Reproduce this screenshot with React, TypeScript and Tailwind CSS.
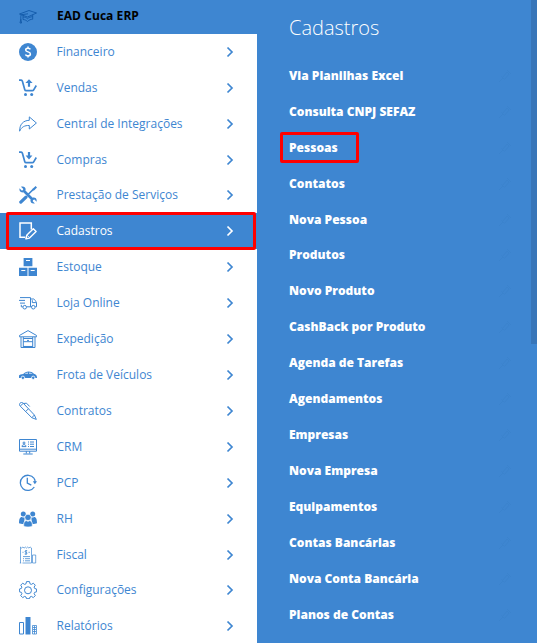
import type { ReactNode } from 'react'
import clsx from 'clsx'

type MenuItem = {
  label: string
  icon: ReactNode
}

// Ícones do menu, todos em uma grade de 18x18
function Icon({ children }: { children: ReactNode }) {
  return (
    <svg
      viewBox="0 0 18 18"
      className="size-[18px] shrink-0"
      fill="none"
      stroke="currentColor"
      strokeWidth="1"
    >
      {children}
    </svg>
  )
}

function CartBase() {
  return (
    <>
      <path d="M0 1.200h2.200c.7 0 1 .4 1.200 1.100l2.400 8.400c.2.7.6 1 1.300 1h6.200c.7 0 1.100-.3 1.400-.9L17.300 6.500" strokeWidth="1.700" />
      <circle cx="6.500" cy="15.600" r="1.500" fill="currentColor" stroke="none" />
      <circle cx="12.700" cy="15.600" r="1.500" fill="currentColor" stroke="none" />
    </>
  )
}

const items: MenuItem[] = [
  {
    label: 'Financeiro',
    icon: (
      <>
        <circle cx="9" cy="9" r="9" fill="currentColor" stroke="none" />
        <path d="M11.400 6.300C11 5.500 10.100 5.200 9 5.200c-1.400 0-2.300.6-2.300 1.700 0 2.600 4.700 1.300 4.700 4 0 1.200-1 1.900-2.400 1.900-1.200 0-2.200-.5-2.500-1.400M9 3.400v1.800M9 12.800v1.800" stroke="#fff" strokeWidth="1.500" />
      </>
    ),
  },
  {
    label: 'Vendas',
    icon: (
      <>
        <CartBase />
        <path d="M10 .3l3.600 3.800h-2.500v3.700H8.900V4.100H6.400z" fill="currentColor" stroke="none" />
      </>
    ),
  },
  {
    label: 'Central de Integrações',
    icon: <path d="M.6 16.200C.6 9.300 4.200 5.500 10.300 5.300V1.900L17.400 8l-7.100 6v-3.500C5.600 10.300 2.500 12 .6 16.200z" strokeLinejoin="round" />,
  },
  {
    label: 'Compras',
    icon: (
      <>
        <CartBase />
        <path d="M10 8.400l3.400-3.800h-2.300V.9H8.900v3.700H6.600z" fill="currentColor" stroke="none" />
      </>
    ),
  },
  {
    label: 'Prestação de Serviços',
    icon: (
      <>
        <path d="M5 5l8.500 8.500" strokeWidth="2.600" />
        <path d="M2 .7l2.300 2.200-.4 1.300-1.300.4L.5 2.300C0 5 1.600 6.800 4.300 6.300L6.600 4C7 1.500 5 0 2 .7z" fill="currentColor" stroke="none" />
        <path d="M15.900 17.400l-2.200-2.200.4-1.300 1.300-.4 2.200 2.200c.5-2.800-1.100-4.600-3.900-4l-2.200 2.200c-.4 2.600 1.500 4.200 4.400 3.500z" fill="currentColor" stroke="none" />
        <path d="M8.800 8.800l6-5.900" strokeWidth="1.500" />
        <path d="M13.700 2.700L16.600 0 18 1.400l-2.700 2.900-1.100.2-.7-.7z" fill="currentColor" stroke="none" />
        <path d="M1.800 16.100l5.200-5" strokeWidth="3.200" strokeLinecap="round" />
      </>
    ),
  },
  {
    label: 'Cadastros',
    icon: (
      <>
        <path d="M12.300 7.500V1H1v14.300h5.200" strokeWidth="1.500" />
        <path d="M6.900 16.800l.8-3.500 6.600-6.500 2.800 2.800-6.600 6.500z" strokeWidth="1.400" strokeLinejoin="round" />
        <path d="M8 13.200l2.600 2.600" />
      </>
    ),
  },
  {
    label: 'Estoque',
    icon: (
      <>
        <path d="M4.600 0h8.800v8.200H4.600zM0 9.700h8.500V18H0zM9.500 9.700H18V18H9.500z" fill="currentColor" stroke="none" />
        <path d="M7 2.500h4M2.300 12.500h4M11.700 12.500h4" stroke="#fff" />
      </>
    ),
  },
  {
    label: 'Loja Online',
    icon: (
      <>
        <path d="M1 3.600h10.500v9.200H7.800M0 6.400h6M1 9.100h5M2.300 12.800h1.400M2.300 10.800v2M11.500 5h3.300c1.300.8 2.200 2.400 2.700 4v3.800h-1.300M11.500 12.800h1M13.300 6.200v2.400h3.600" />
        <circle cx="5.700" cy="13.200" r="1.800" />
        <circle cx="14.300" cy="13.200" r="1.800" />
      </>
    ),
  },
  {
    label: 'Expedição',
    icon: (
      <>
        <path d="M.4 6.800V5.500L9 .6l8.600 4.900v1.300H.4M2 7v10.500h14V7M4.300 17.500V7M13.700 17.500V7M4.300 8.500h9.400M4.300 11.700h9.400M8 10.400h2" />
        <path d="M4.300 16.700h9.400" strokeWidth="1.500" />
      </>
    ),
  },
  {
    label: 'Frota de Veículos',
    icon: (
      <>
        <path d="M0 12V9.500c.4-1 2.400-1.500 4.200-1.600 1.500-1.600 3.100-2.500 5.300-2.500 2.500 0 4 .7 5.400 2.400 1.800.4 3.100 1.600 3.100 3.600v.6H0z" fill="currentColor" stroke="none" />
        <path d="M5.600 7.900c.9-1 2-1.500 3.400-1.500v1.500zM10 6.400c1.600 0 2.700.5 3.600 1.500H10z" fill="#fff" fillOpacity=".6" stroke="none" />
        <circle cx="3.900" cy="11.800" r="1.700" fill="currentColor" stroke="#fff" strokeWidth=".8" />
        <circle cx="14.200" cy="11.800" r="1.700" fill="currentColor" stroke="#fff" strokeWidth=".8" />
      </>
    ),
  },
  {
    label: 'Contratos',
    icon: (
      <path d="M1 1.200c1-1 2.300-.9 3.200 0L15.400 13l1.900 4.400-4.500-1.700L1.200 4.100c-.9-.9-1-2-.2-2.900zM12.800 15.700l2.600-2.700M6.700 9.500l2.700-2.700M1.300 4l3-2.700M4.500 1.500l3-.3 3.200 3.300" />
    ),
  },
  {
    label: 'CRM',
    icon: (
      <>
        <path d="M.5 1.500h17v11.700H.5zM.5 11.200h17M7.300 13.200v2.300M10.700 13.200v2.300M4.300 16h9.400" />
        <circle cx="5" cy="5" r="1" />
        <path d="M3 8.600c0-2.600 4-2.600 4 0zM9 4h1M11 4h4M9 6.200h1M11 6.200h4M9 8.500h1M11 8.500h4" />
      </>
    ),
  },
  {
    label: 'PCP',
    icon: (
      <>
        <path d="M15.100 4.400A7.600 7.600 0 1 0 15.300 13" strokeWidth="1.300" />
        <path d="M15.100 4.400c.7 1.100 1 2.200 1 3.500" strokeWidth="1.300" />
        <path d="M13.800 7.300H18l-2.100 3z" fill="currentColor" stroke="none" />
        <path d="M8.300 3.700v5.500l4 1.900" strokeWidth="1.300" />
      </>
    ),
  },
  {
    label: 'RH',
    icon: (
      <g fill="currentColor" stroke="none">
        <circle cx="4.300" cy="4" r="2.500" />
        <circle cx="13.700" cy="4" r="2.500" />
        <path d="M0 13.300c0-4 .7-6.300 3-6.300.8.600 1.700.7 2.500.3C6 9.400 5 11 4.500 14 2.800 14 1 13.900 0 13.300zM18 13.300c0-4-.7-6.300-3-6.300-.8.600-1.700.7-2.500.3C12 9.400 13 11 13.500 14c1.700 0 3.500-.1 4.500-.7z" />
        <circle cx="9" cy="7.400" r="3.200" stroke="#fff" strokeWidth=".7" />
        <path d="M4.600 16c0-3.400.9-5.300 2.900-5.300.9.700 2.100.7 3 0 2 0 2.900 1.900 2.900 5.300-2.300 1.300-6.500 1.300-8.800 0z" stroke="#fff" strokeWidth=".6" />
      </g>
    ),
  },
  {
    label: 'Fiscal',
    icon: (
      <>
        <path d="M1.500 17V1l1.200 1.100L3.900 1l1.200 1.100L6.300 1l1.200 1.100L8.700 1l1.200 1.100L11.100 1l1.400 1v15M.8 17h1.400M3.500 17h9M13.500 17V9h3.200v8z" strokeWidth=".7" />
        <path d="M8.200 4.700H7c-1.300 0-1.200 1.500 0 1.600 1.400.1 1.400 1.700 0 1.700H5.700M7 4v5" strokeWidth=".8" />
        <path d="M3.500 6.300h1M9.500 6.300h1.300M4 10.600h7M4 12.700h1M6 12.700h5M4 14.800h1M6 14.800h5" strokeWidth=".8" />
      </>
    ),
  },
  {
    label: 'Configurações',
    icon: (
      <>
        <path d="M7.500.6h3l.5 2.200 1.400.6 1.900-1.200 2 2-1.200 1.900.6 1.400 1.900.5v2.800l-1.900.5-.6 1.400 1.200 1.900-2 2-1.900-1.200-1.400.6-.5 1.700h-3L7 16l-1.400-.6-1.900 1.200-2-2 1.200-1.900-.6-1.400L.4 10.800V8l1.900-.5.6-1.400-1.200-1.900 2-2 1.900 1.200L7 2.800z" strokeLinejoin="round" />
        <circle cx="9" cy="9.300" r="3.500" />
      </>
    ),
  },
  {
    label: 'Relatórios',
    icon: (
      <>
        <path d="M.5 5.500h4v11.500h-4z" />
        <path d="M6.500 0h5v17.500h-5z" fill="currentColor" stroke="none" />
        <path d="M13.500 8.500h4V17h-4zM14 10.500h3M14 12.500h3M14 14.500h3M15.500 9v8" strokeWidth=".8" />
      </>
    ),
  },
]

const links = [
  'Via Planilhas Excel',
  'Consulta CNPJ SEFAZ',
  'Pessoas',
  'Contatos',
  'Nova Pessoa',
  'Produtos',
  'Novo Produto',
  'CashBack por Produto',
  'Agenda de Tarefas',
  'Agendamentos',
  'Empresas',
  'Nova Empresa',
  'Equipamentos',
  'Contas Bancárias',
  'Nova Conta Bancária',
  'Planos de Contas',
]

function SidebarItem({ item, active }: { item: MenuItem; active: boolean }) {
  return (
    <li
      className={clsx(
        'relative flex h-[35.92px] shrink-0 items-center pl-[19px] pr-[23px]',
        active ? 'bg-[#3e86d1] text-white' : 'text-[#3e86d1]'
      )}
    >
      <Icon>{item.icon}</Icon>
      <span className="ml-[19.5px] flex-1 whitespace-nowrap">{item.label}</span>
      <svg viewBox="0 0 8 12" className="h-3 w-2 shrink-0" fill="none" stroke="currentColor" strokeWidth="1.700">
        <path d="M1.500 1.500L6 6l-4.500 4.500" />
      </svg>
      {/* destaque do item selecionado */}
      {active && <span className="absolute -top-[1.3px] left-[6px] z-10 h-[38px] w-[250px] rounded-[2px] border-[3px] border-[#ff0000]" />}
    </li>
  )
}

export default function App() {
  return (
    <div className="flex h-[643px] w-[537px] overflow-hidden bg-[#3e86d1] font-['Open_Sans','Noto_Sans',sans-serif] text-[12px] leading-[18px]">
      <aside className="flex w-[257px] shrink-0 flex-col bg-white">
        <header className="flex h-[33.87px] shrink-0 items-center bg-[#3e86d1] pl-[19px] text-[#1259a8]">
          <Icon>
            <path d="M.5 6L10 2.500 17.500 5 8.500 9zM4 7.500v4c2 .2 3.300.8 4.500 2 1.400-1.500 3.200-2.200 5.200-2.300V6.800M4 9c1.900.1 3.400.6 4.500 1.700 1.400-1.300 3-1.900 5.200-2M9 5.800l-6 .8c-1 .3-1.200 1-1.200 2V12M1.800 11.500L1 15h1.600z" strokeWidth=".9" />
          </Icon>
          <span className="-mt-[2px] ml-5 font-bold tracking-[0.06px] text-black">EAD Cuca ERP</span>
        </header>
        <ul className="flex flex-col">
          {items.map((item) => (
            <SidebarItem key={item.label} item={item} active={item.label === 'Cadastros'} />
          ))}
        </ul>
      </aside>

      <main className="flex-1 pl-8 pt-[13px]">
        <h1 className="h-[44.93px] text-[20px] font-light leading-[30px] text-white">Cadastros</h1>
        <ul className="flex flex-col font-extrabold text-white">
          {links.map((link) => (
            <li key={link} className="relative flex h-[35.93px] items-center justify-between pr-[19px]">
              <span>{link}</span>
              <svg viewBox="0 0 14 14" className="size-3.5 text-[#397fc9] opacity-50" fill="none" stroke="currentColor">
                <path d="M1 13l4-4M3.500 7.500l3 3M5 8l4-5 2 2-4 5M9 1l4 4" strokeWidth=".7" />
              </svg>
              {link === 'Pessoas' && (
                <span className="absolute -left-[9px] top-[2.2px] h-[31px] w-[79px] rounded-[2px] border-[3px] border-[#ff0000]" />
              )}
            </li>
          ))}
        </ul>
      </main>

      {/* barra de rolagem */}
      <div className="w-1.5 shrink-0">
        <div className="h-[344px] bg-[#3876b9]" />
      </div>
    </div>
  )
}
